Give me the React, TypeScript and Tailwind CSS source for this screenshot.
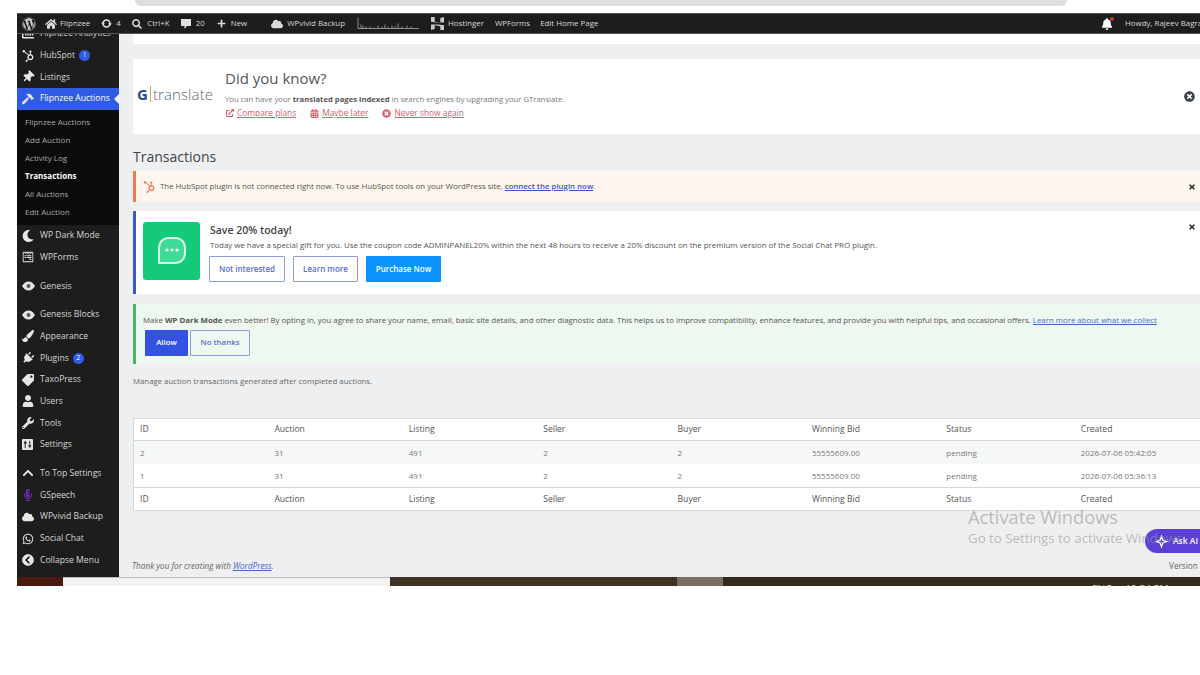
import type { ReactNode } from 'react'
import {
	FaBell,
	FaCalendarAlt,
	FaChartBar,
	FaChevronUp,
	FaCloud,
	FaExternalLinkAlt,
	FaHammer,
	FaHome,
	FaHubspot,
	FaPaintBrush,
	FaPlug,
	FaPlus,
	FaSearch,
	FaTag,
	FaThumbtack,
	FaTimes,
	FaTimesCircle,
	FaUser,
	FaWhatsapp,
	FaWordpress,
	FaWpforms,
	FaWrench,
	FaMoon,
	FaChevronCircleLeft,
	FaMicrophoneAlt,
} from 'react-icons/fa'

const font = 'font-["Open_Sans",sans-serif]'

function GenesisIcon() {
	return (
		<svg viewBox="0 0 20 14" className="h-[10px] w-[13px]">
			<path d="M0 7 C3 2 6 0 10 0 C14 0 17 2 20 7 C17 12 14 14 10 14 C6 14 3 12 0 7Z" fill="#e4e4e4" />
			<circle cx="10" cy="7" r="3" fill="#555" />
		</svg>
	)
}

function HostingerIcon() {
	return (
		<svg viewBox="0 0 14 14" className="h-[13px] w-[13px]" fill="#c9c9c9">
			<path d="M0 0h4v5l6 1V1l4-1v6H6L0 5zM0 8h8l6 1v5h-4v-4l-6-1v4l-4 1z" />
		</svg>
	)
}

function Sparkline() {
	return (
		<svg viewBox="0 0 62 12" className="h-[13px] w-[62px]" fill="none" stroke="#bdbdbd" strokeWidth="0.7">
			<path d="M1 0V11H62" />
			<path d="M4 11V7M6 11V8M9 11V9M13 11V9M17 11V10M21 11V8M25 11V9M28 11V7M31 11V9M35 11V8M38 11V9M41 11V6M45 11V9M50 11V8M54 11V9" />
		</svg>
	)
}

// dashicons-style update ring, thicker than the FontAwesome sync arrows
function UpdateIcon() {
	return (
		<svg viewBox="0 0 12 12" className="ml-[11px] h-[11px] w-[11px]" fill="none">
			<circle cx="6" cy="6" r="3.8" stroke="#e0e0e0" strokeWidth="1.8" />
			<path d="M0 6l2.2-2.2L4.4 6zM12 6L9.800 8.200 7.600 6z" fill="#e0e0e0" />
		</svg>
	)
}

function CommentIcon() {
	return (
		<svg viewBox="0 0 10 10" className="ml-[11px] h-[10px] w-[10px]" fill="#e0e0e0">
			<path d="M0 0h10v7H6L3.500 10V7H0z" />
		</svg>
	)
}

function SettingsIcon() {
	return (
		<svg viewBox="0 0 12 12" className="h-[11px] w-[11px]">
			<rect width="12" height="12" rx="1" fill="#e6e6e6" />
			<path d="M3.500 2v8M8.500 2v8" stroke="#1d1d1d" strokeWidth="1" />
			<path d="M2 4h3M7 7.500h3" stroke="#1d1d1d" strokeWidth="1.600" />
		</svg>
	)
}

const menuItems: { label: string; icon: ReactNode; className?: string; badge?: string; active?: boolean }[] = [
	{ label: 'Flipnzee Analytics', icon: <FaChartBar />, className: '-mt-[11px]' },
	{ label: 'HubSpot', icon: <FaHubspot />, badge: '!' },
	{ label: 'Listings', icon: <FaThumbtack className="rotate-45" /> },
	{ label: 'Flipnzee Auctions', icon: <FaHammer />, active: true },
]

const menuItemsAfter: { label: string; icon: ReactNode; className?: string; badge?: string }[] = [
	{ label: 'WP Dark Mode', icon: <FaMoon /> },
	{ label: 'WPForms', icon: <FaWpforms /> },
	{ label: 'Genesis', icon: <GenesisIcon />, className: 'mt-[7px]' },
	{ label: 'Genesis Blocks', icon: <GenesisIcon />, className: 'mt-[7px]' },
	{ label: 'Appearance', icon: <FaPaintBrush /> },
	{ label: 'Plugins', icon: <FaPlug className="rotate-45" />, badge: '2' },
	{ label: 'TaxoPress', icon: <FaTag className="rotate-90" /> },
	{ label: 'Users', icon: <FaUser /> },
	{ label: 'Tools', icon: <FaWrench /> },
	{ label: 'Settings', icon: <SettingsIcon /> },
	{ label: 'To Top Settings', icon: <FaChevronUp />, className: 'mt-[7px]' },
	{ label: 'GSpeech', icon: <FaMicrophoneAlt className="text-[#6a2bb0]" /> },
	{ label: 'WPvivid Backup', icon: <FaCloud /> },
	{ label: 'Social Chat', icon: <FaWhatsapp /> },
	{ label: 'Collapse Menu', icon: <FaChevronCircleLeft /> },
]

const subItems = ['Flipnzee Auctions', 'Add Auction', 'Activity Log', 'Transactions', 'All Auctions', 'Edit Auction']

const columns = ['ID', 'Auction', 'Listing', 'Seller', 'Buyer', 'Winning Bid', 'Status', 'Created']
const rows = [
	['2', '31', '491', '2', '2', '55555609.00', 'pending', '2026-07-06 05:42:05'],
	['1', '31', '491', '2', '2', '55555609.00', 'pending', '2026-07-06 05:36:13'],
]

function MenuRow({ item }: { item: { label: string; icon: ReactNode; className?: string; badge?: string; active?: boolean } }) {
	return (
		<div
			className={`relative flex h-[21.7px] shrink-0 items-center pl-[5px] text-[8.6px] ${item.active ? 'bg-[#2f5be7] text-white' : 'text-[#d6d6d6]'} ${item.className ?? ''}`}
		>
			<span className="flex w-[18px] text-[12px] text-[#e6e6e6]">{item.icon}</span>
			<span>{item.label}</span>
			{item.badge && (
				<span className="ml-[4px] flex h-[11px] w-[11px] items-center justify-center rounded-full bg-[#2f5be7] text-[7px] text-white">
					{item.badge}
				</span>
			)}
			{item.active && (
				<span className="absolute right-0 top-[6px] h-0 w-0 border-y-[5px] border-r-[5px] border-y-transparent border-r-[#f0f0f1]" />
			)}
		</div>
	)
}

function Sidebar() {
	return (
		<aside className="flex w-[102px] shrink-0 flex-col overflow-hidden bg-[#1d1d1d]">
			{menuItems.map((item) => (
				<MenuRow item={item} key={item.label} />
			))}
			<div className="flex h-[115px] shrink-0 flex-col bg-[#0b0b0b] pl-[8px] pt-[3px] text-[8px] text-[#a8a8a8]">
				{subItems.map((label) => (
					<div key={label} className={`flex h-[18px] shrink-0 items-center ${label === 'Transactions' ? 'font-bold text-white' : ''}`}>
						{label}
					</div>
				))}
			</div>
			{menuItemsAfter.map((item) => (
				<MenuRow item={item} key={item.label} />
			))}
		</aside>
	)
}

function AdminBar() {
	return (
		<header className="flex h-[21px] shrink-0 items-center border-y border-[#555] bg-[#1d1d1d] text-[7.9px] text-[#d8d8d8]">
			<FaWordpress className="ml-[5px] text-[14px] text-[#cfcfcf]" />
			<FaHome className="ml-[9px] text-[12px]" />
			<span className="ml-[3px]">Flipnzee</span>
			<UpdateIcon />
			<span className="ml-[4px]">4</span>
			<FaSearch className="ml-[11.500px] text-[10px]" />
			<span className="ml-[5px]">Ctrl+K</span>
			<CommentIcon />
			<span className="ml-[5px]">20</span>
			<FaPlus className="ml-[12px] text-[9px]" />
			<span className="ml-[5px]">New</span>
			<FaCloud className="ml-[24px] text-[12px]" />
			<span className="ml-[4px]">WPvivid Backup</span>
			<span className="ml-[12px] flex"><Sparkline /></span>
			<span className="ml-[12px] flex"><HostingerIcon /></span>
			<span className="ml-[4px]">Hostinger</span>
			<span className="ml-[11px]">WPForms</span>
			<span className="ml-[10px]">Edit Home Page</span>
			<span className="relative ml-auto flex">
				<FaBell className="text-[12px] text-white" />
				<span className="absolute -right-[1px] -top-[1px] h-[4px] w-[4px] rounded-full bg-[#c0392b]" />
			</span>
			<span className="ml-[12px] w-[75px] whitespace-nowrap">Howdy, Rajeev Bagra</span>
		</header>
	)
}

function LinkWithIcon({ icon, children, className }: { icon: ReactNode; children: ReactNode; className: string }) {
	return (
		<span className={`flex items-center text-[#d9606d] ${className}`}>
			<span className="mr-[3px] flex text-[9px]">{icon}</span>
			<span className="underline">{children}</span>
		</span>
	)
}

function GTranslateBox() {
	return (
		<section className="mt-[15px] flex h-[75px] shrink-0 items-start bg-white">
			<div className="ml-[4px] mt-[25px] flex w-[83px] shrink-0 items-center text-[15px] font-light leading-[20px] tracking-[0.1px] text-[#5c6b7a]">
				<span className="pr-[2px] font-bold text-[#2d4a80]">G</span>
				<span className="mr-[2px] h-[16px] w-px bg-[#d9a84e]" />
				<span>translate</span>
			</div>
			<div className="ml-[5px] pt-[9px]">
				<div className="text-[15px] leading-[20px] text-[#50575e]">Did you know?</div>
				<div className="mt-[5px] text-[7.7px] leading-[12px] text-[#777]">
					You can have your <b className="text-[#555]">translated pages indexed</b> in search engines by upgrading your GTranslate.
				</div>
				<div className="ml-[1px] mt-[2px] flex text-[8.4px] leading-[12px]">
					<LinkWithIcon icon={<FaExternalLinkAlt className="text-[8px]" />} className="">Compare plans</LinkWithIcon>
					<LinkWithIcon icon={<FaCalendarAlt />} className="ml-[14px]">Maybe later</LinkWithIcon>
					<LinkWithIcon icon={<FaTimesCircle />} className="ml-[14px]">Never show again</LinkWithIcon>
				</div>
			</div>
			<FaTimesCircle className="ml-auto mr-[5px] mt-[32px] text-[11px] text-[#3c434a]" />
		</section>
	)
}

function Notices() {
	return (
		<>
			<section className="mt-[5px] flex h-[31px] shrink-0 items-center border-l-[3px] border-[#ee7c4e] bg-[#fdf6ee] text-[7.85px] text-[#555]">
				<FaHubspot className="ml-[7px] text-[12px] text-[#ef7b52]" />
				<span className="ml-[5px]">
					The HubSpot plugin is not connected right now. To use HubSpot tools on your WordPress site,{' '}
					<a className="font-semibold text-[#3858c8] underline">connect the plugin now</a>.
				</span>
				<FaTimes className="ml-auto mr-[4px] text-[8px] text-[#23282d]" />
			</section>
			<section className="mt-[9px] flex h-[83px] shrink-0 border-l-[3px] border-[#3e58c8] bg-white">
				<div className="ml-[7px] mt-[11px] flex h-[58px] w-[57px] shrink-0 items-center justify-center rounded-[3px] bg-[#14c97a]">
					<svg viewBox="0 0 30 30" className="h-[30px] w-[30px]" fill="none">
						<path d="M2 27V12C2 6 6 2 12 2H18C24 2 28 6 28 12V17C28 23 24 27 18 27Z" stroke="#d8f7e8" strokeWidth="2" fill="#3ddc97" />
						<circle cx="10" cy="14" r="1.6" fill="#fff" />
						<circle cx="15" cy="14" r="1.6" fill="#fff" />
						<circle cx="20" cy="14" r="1.6" fill="#fff" />
					</svg>
				</div>
				<div className="ml-[10px] pt-[12px]">
					<div className="text-[10.5px] font-semibold leading-[14px] text-[#444]">Save 20% today!</div>
					<div className="mt-[2px] whitespace-nowrap text-[7.88px] leading-[12px] text-[#555]">
						Today we have a special gift for you. Use the coupon code ADMINPANEL20% within the next 48 hours to receive a 20% discount on the premium version of the Social Chat PRO plugin.
					</div>
					<div className="-ml-px mt-[5px] flex text-[8px] font-semibold">
						<span className="flex h-[26px] w-[76px] items-center justify-center rounded-[1px] border border-[#8f9ed8] text-[#5a6fd0]">Not interested</span>
						<span className="ml-[8px] flex h-[26px] w-[65px] items-center justify-center rounded-[1px] border border-[#8f9ed8] text-[#5a6fd0]">Learn more</span>
						<span className="ml-[8px] flex h-[26px] w-[75px] items-center justify-center rounded-[1px] bg-[#0a94fb] text-white">Purchase Now</span>
					</div>
				</div>
				<FaTimes className="ml-auto mr-[4px] mt-[12px] shrink-0 text-[8px] text-[#23282d]" />
			</section>
			<section className="mt-[10px] h-[60px] shrink-0 border-l-[3px] border-[#46b964] bg-[#eff7f1] pl-[7px] pt-[10px] text-[7.85px] text-[#555]">
				<div className="whitespace-nowrap leading-[12px]">
					Make <b>WP Dark Mode</b> even better! By opting in, you agree to share your name, email, basic site details, and other diagnostic data. This helps us to improve compatibility, enhance features, and provide you with helpful tips, and occasional offers.{' '}
					<a className="text-[#3a6fc8] underline">Learn more about what we collect</a>
				</div>
				<div className="ml-[2px] mt-[4px] flex font-semibold">
					<span className="flex h-[26px] w-[43px] items-center justify-center rounded-[1px] bg-[#3452e1] text-white">Allow</span>
					<span className="ml-[2px] flex h-[26px] w-[60px] items-center justify-center rounded-[1px] border border-[#8f9ed8] text-[#5a6fd0]">No thanks</span>
				</div>
			</section>
		</>
	)
}

function TransactionsTable() {
	return (
		<div className="mt-[31px] w-[1076px] shrink-0 border border-[#d5d8dc] bg-white text-[8px] text-[#555]">
			<div className="flex h-[22px] items-center border-b border-[#d5d8dc] text-[8.6px]">
				{columns.map((c) => (
					<span key={c} className="w-[134.4px] shrink-0 pl-[6px]">{c}</span>
				))}
			</div>
			{rows.map((row, index) => (
				<div key={index} className={`flex h-[23px] items-center text-[#777] ${index === 0 ? 'bg-[#f6f7f7]' : ''}`}>
					{row.map((cell, i) => (
						<span key={i} className="w-[134.4px] shrink-0 pl-[6px]">{cell}</span>
					))}
				</div>
			))}
			<div className="flex h-[23px] items-center border-t border-[#d5d8dc] text-[8.6px]">
				{columns.map((c) => (
					<span key={c} className="w-[134.4px] shrink-0 pl-[6px]">{c}</span>
				))}
			</div>
		</div>
	)
}

function App() {
	return (
		<div className={`relative h-[675px] w-[1200px] overflow-hidden bg-white ${font}`}>
			<div className="ml-[135px] h-[6px] w-[932px] rounded-b-[6px] bg-[#dedede]" />
			<div className="ml-[17px] mt-[7px] flex h-[573px] flex-col overflow-hidden">
				<AdminBar />
				<div className="flex h-[543px] shrink-0">
					<Sidebar />
					<main className="flex min-w-0 flex-1 flex-col overflow-hidden bg-[#eeeff0] pl-[14px]">
						<div className="h-[10px] shrink-0 bg-white" />
						<GTranslateBox />
						<h1 className="mt-[13px] shrink-0 text-[14px] leading-[19px] text-[#3c434a]">Transactions</h1>
						<Notices />
						<p className="mt-[11px] shrink-0 text-[7.8px] leading-[12px] text-[#666]">
							Manage auction transactions generated after completed auctions.
						</p>
						<TransactionsTable />
						<div className="mt-[49px] flex shrink-0 items-center text-[8.2px] leading-[12px] text-[#666]">
							<i className="-ml-[1px]">
								Thank you for creating with <a className="text-[#4a63c8] underline">WordPress</a>.
							</i>
							<span className="ml-auto w-[31px] whitespace-nowrap">Version 7.0</span>
						</div>
					</main>
				</div>
				<div className="flex h-[9px] shrink-0 overflow-hidden">
					<div className="w-[46px] bg-[#4a1a10]" />
					<div className="w-[327px] border-t border-[#bbb] bg-[#f2f2f2]" />
					<div className="w-[287px] bg-[#3f3222]" />
					<div className="w-[46px] bg-[#7a6e62]" />
					<div className="flex flex-1 bg-[#33291f] pl-[369px] pt-[6px] text-[10px] leading-[12px] text-[#d8d8d8]">
						<span>ENG</span>
						<span className="ml-[13px]">12:34 PM</span>
					</div>
				</div>
			</div>
			<div className="absolute left-[1145px] top-[529px] flex h-[24px] w-[70px] items-center rounded-l-[12px] bg-[#5b3fd6] pl-[10px] text-[8.5px] font-semibold text-white">
				<svg viewBox="0 0 12 12" className="mr-[5px] h-[13px] w-[13px]" fill="none" stroke="#fff" strokeWidth="1.2">
					<path d="M6 1L7.2 4.8L11 6L7.2 7.2L6 11L4.8 7.2L1 6L4.8 4.8Z" />
				</svg>
				Ask AI
			</div>
			<div className="pointer-events-none absolute left-[968px] top-[505px] whitespace-nowrap text-[#969696]/60">
				<div className="text-[18.3px] leading-[24px]">Activate Windows</div>
				<div className="text-[13.3px] leading-[18px]">Go to Settings to activate Windows.</div>
			</div>
		</div>
	)
}

export default App
